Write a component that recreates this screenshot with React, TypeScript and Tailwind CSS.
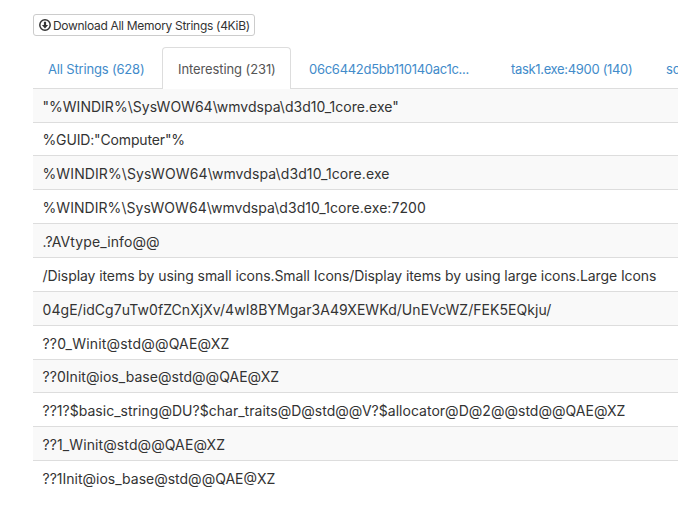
type Item = { text: string; className: string };

const tabs: Item[] = [
  { text: "All Strings (628)", className: "w-[129px] pt-[12px] text-[#428bca] tracking-[-0.17px]" },
  {
    text: "Interesting (231)",
    className: "w-[129px] rounded-t-[4px] border border-b-0 border-[#ddd] bg-white pt-[11px] text-[#555] tracking-[-0.1px]",
  },
  { text: "06c6442d5bb110140ac1c...", className: "ml-[3px] w-[202px] pt-[12px] text-[#428bca] tracking-[-0.28px]" },
  { text: "task1.exe:4900 (140)", className: "w-[155px] pt-[12px] text-[#428bca] tracking-[-0.33px]" },
  { text: "sc", className: "pt-[12px] text-[#428bca] tracking-[-0.2px]" },
];

const rows: Item[] = [
  { text: '"%WINDIR%\\SysWOW64\\wmvdspa\\d3d10_1core.exe"', className: "h-[33px] pt-[3px] tracking-[0.02px]" },
  { text: '%GUID:"Computer"%', className: "h-[33px] border-t pt-px tracking-[-0.15px]" },
  { text: "%WINDIR%\\SysWOW64\\wmvdspa\\d3d10_1core.exe", className: "h-[34px] border-t pt-[3px] tracking-[0.11px]" },
  { text: "%WINDIR%\\SysWOW64\\wmvdspa\\d3d10_1core.exe:7200", className: "h-[34px] border-t pt-[3px] tracking-[0.055px]" },
  { text: ".?AVtype_info@@", className: "h-[34px] border-t pt-[3px] tracking-[0.1px]" },
  {
    text: "/Display items by using small icons.Small Icons/Display items by using large icons.Large Icons",
    className: "h-[34px] border-t pt-[3px] tracking-[-0.075px]",
  },
  {
    text: "04gE/idCg7uTw0fZCnXjXv/4wI8BYMgar3A49XEWKd/UnEVcWZ/FEK5EQkju/",
    className: "h-[34px] border-t pt-[3px] tracking-[0.055px]",
  },
  { text: "??0_Winit@std@@QAE@XZ", className: "h-[34px] border-t pt-[3px] tracking-[0.19px]" },
  { text: "??0Init@ios_base@std@@QAE@XZ", className: "h-[33px] border-t pt-px tracking-[0.04px]" },
  {
    text: "??1?$basic_string@DU?$char_traits@D@std@@V?$allocator@D@2@@std@@QAE@XZ",
    className: "h-[34px] border-t pt-[3px] tracking-[0.02px]",
  },
  { text: "??1_Winit@std@@QAE@XZ", className: "h-[34px] border-t pt-[3px] tracking-[0.1px]" },
  { text: "??1Init@ios_base@std@@QAE@XZ", className: "h-[34px] border-t pt-[3px]" },
];

function DownloadIcon() {
  return (
    <svg className="mr-[2px] size-3 shrink-0" viewBox="0 0 12 12" aria-hidden="true">
      <circle cx="6" cy="6" r="5.2" fill="none" stroke="#333" strokeWidth="1.5" />
      <path d="M4.9 2.8h2.2v3.1h2L6 9.4 2.9 5.9h2z" fill="#333" />
    </svg>
  );
}

export default function App() {
  return (
    <div className="h-[507px] w-full overflow-hidden bg-white pl-[33px] pt-[14px] font-['Inter','Liberation_Sans',sans-serif] text-[#333]">
      <button className="flex h-[22px] w-[222px] items-center rounded-[3px] border border-[#ccc] bg-white pl-[5px] text-[12px] leading-[18px] tracking-[-0.3px] whitespace-nowrap">
        <DownloadIcon />
        <span className="pt-px">Download All Memory Strings (4KiB)</span>
      </button>
      <div className="mt-[11px] flex h-[42px] border-b border-[#ddd] text-[13px] leading-5">
        {tabs.map((tab) => (
          <div key={tab.text} className={`-mb-px shrink-0 pl-[15px] whitespace-nowrap ${tab.className}`}>
            {tab.text}
          </div>
        ))}
      </div>
      <div>
        {rows.map((row) => (
          <div
            key={row.text}
            className={`flex items-center border-[#ddd] pl-[9.5px] text-[14px] leading-5 whitespace-nowrap odd:bg-[#f9f9f9] ${row.className}`}
          >
            {row.text}
          </div>
        ))}
      </div>
    </div>
  );
}
